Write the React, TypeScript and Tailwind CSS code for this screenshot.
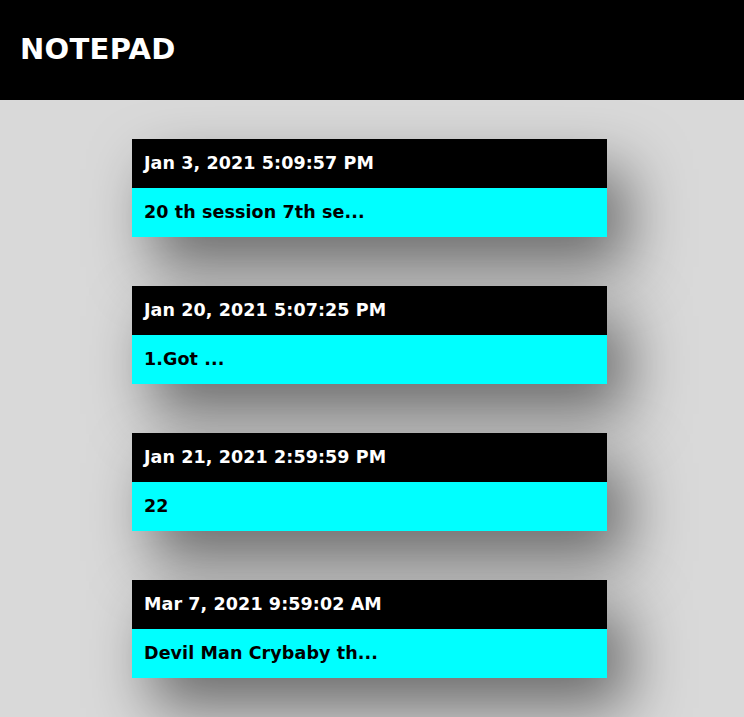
import React from "react";

const notes = [
  { date: "Jan 3, 2021 5:09:57 PM", text: "20 th session 7th se..." },
  { date: "Jan 20, 2021 5:07:25 PM", text: "1.Got ..." },
  { date: "Jan 21, 2021 2:59:59 PM", text: "22" },
  { date: "Mar 7, 2021 9:59:02 AM", text: "Devil Man Crybaby th..." },
];

export default function App() {
  return (
    <div
      className="min-h-[717px] bg-[#d9d9d9] overflow-hidden"
      style={{ fontFamily: '"DejaVu Sans", "Noto Sans", sans-serif' }}
    >
      <header className="relative z-10 h-[100px] bg-black flex items-center px-5">
        <h1 className="text-white font-bold text-[29px] tracking-[0.3px]">NOTEPAD</h1>
      </header>
      <main className="flex flex-col gap-[49px] pt-[39px] pl-[132px]">
        {notes.map((n) => (
          <div
            key={n.date}
            className="w-[475px] shadow-[20px_30px_60px_rgba(0,0,0,0.5)]"
          >
            <div className="h-[49px] bg-black text-white font-bold text-[17.5px] tracking-[0.1px] flex items-center px-3">
              {n.date}
            </div>
            <div className="h-[49px] bg-[#00ffff] text-black font-bold text-[17.5px] tracking-[0.1px] flex items-center px-3">
              {n.text}
            </div>
          </div>
        ))}
      </main>
    </div>
  );
}
